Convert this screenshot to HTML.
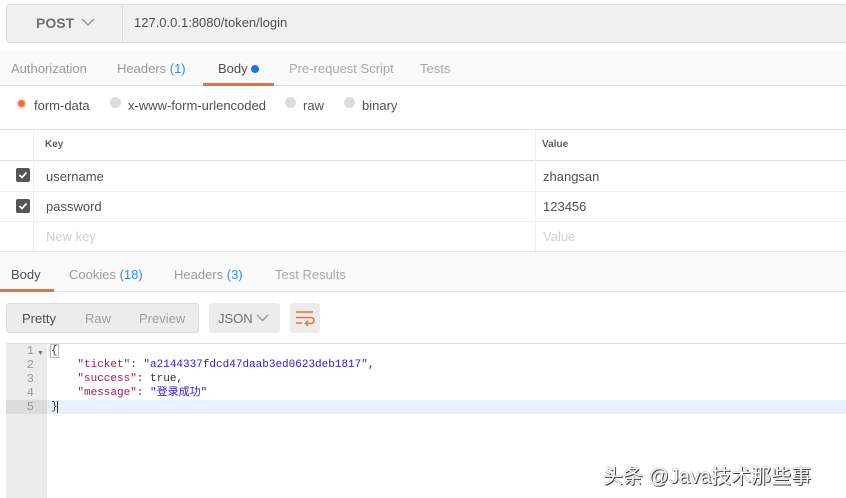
<!DOCTYPE html>
<html><head><meta charset="utf-8"><style>
*{box-sizing:border-box;margin:0;padding:0}
body{width:846px;height:498px;background:#fff;font-family:"Liberation Sans","Noto Sans CJK SC",sans-serif;font-size:13px;color:#505050;position:relative;overflow:hidden}
.a{position:absolute;white-space:nowrap}
.mono{font-family:"Liberation Mono","Noto Sans CJK SC",monospace;font-size:11px}
</style></head><body>
<div class="a" style="left:6px;top:4px;width:842px;height:39px;background:#f0f0f0;border:1px solid #dcdcdc;border-radius:3px"></div>
<div class="a" style="left:122px;top:5px;width:1px;height:37px;background:#dcdcdc"></div>
<div class="a" style="left:36px;top:15px;font-size:14px;font-weight:bold;color:#707070">POST</div>
<svg class="a" style="left:81px;top:18px" width="14" height="9"><path d="M1 1 L7 7 L13 1" stroke="#9a9a9a" stroke-width="1.5" fill="none"/></svg>
<div class="a" style="left:134px;top:15px;color:#505050">127.0.0.1:8080/token/login</div>

<div class="a" style="left:0;top:50px;width:846px;height:36px;background:#fafafa;border-bottom:1px solid #e0e0e0"></div>
<div class="a" style="left:11px;top:61px;color:#999">Authorization</div>
<div class="a" style="left:117px;top:61px;color:#999">Headers <span style="color:#2a8ef0">(1)</span></div>
<div class="a" style="left:218px;top:61px;color:#505050">Body</div>
<div class="a" style="left:251px;top:65px;width:8px;height:8px;border-radius:50%;background:#1a73f0"></div>
<div class="a" style="left:203px;top:83px;width:71px;height:3px;background:#f26b3a"></div>
<div class="a" style="left:289px;top:61px;color:#a8a8a8">Pre-request Script</div>
<div class="a" style="left:420px;top:61px;color:#a8a8a8">Tests</div>

<div class="a" style="left:16px;top:98px;width:11px;height:11px;border-radius:50%;background:#f26b3a;border:2px solid #e8e8e8"></div>
<div class="a" style="left:34px;top:98px">form-data</div>
<div class="a" style="left:110px;top:97px;width:11px;height:11px;border-radius:50%;background:#dcdcdc"></div>
<div class="a" style="left:128px;top:98px">x-www-form-urlencoded</div>
<div class="a" style="left:285px;top:97px;width:11px;height:11px;border-radius:50%;background:#dcdcdc"></div>
<div class="a" style="left:303px;top:98px">raw</div>
<div class="a" style="left:344px;top:97px;width:11px;height:11px;border-radius:50%;background:#dcdcdc"></div>
<div class="a" style="left:362px;top:98px">binary</div>

<div class="a" style="left:0;top:129px;width:846px;height:1px;background:#e0e0e0"></div>
<div class="a" style="left:0;top:160px;width:846px;height:1px;background:#e0e0e0"></div>
<div class="a" style="left:0;top:191px;width:846px;height:1px;background:#f0f0f0"></div>
<div class="a" style="left:0;top:221px;width:846px;height:1px;background:#f0f0f0"></div>
<div class="a" style="left:0;top:251px;width:846px;height:1px;background:#e0e0e0"></div>
<div class="a" style="left:33px;top:130px;width:1px;height:121px;background:#f0f0f0"></div>
<div class="a" style="left:535px;top:130px;width:1px;height:121px;background:#f0f0f0"></div>
<div class="a" style="left:45px;top:139px;font-size:10px;font-weight:bold;color:#606060">Key</div>
<div class="a" style="left:542px;top:139px;font-size:10px;font-weight:bold;color:#606060">Value</div>
<svg class="a" style="left:16px;top:168px" width="14" height="14"><rect width="14" height="14" rx="2" fill="#555"/><path d="M3.5 7 L6 9.5 L10.5 4.5" stroke="#fff" stroke-width="1.8" fill="none"/></svg>
<svg class="a" style="left:16px;top:199px" width="14" height="14"><rect width="14" height="14" rx="2" fill="#555"/><path d="M3.5 7 L6 9.5 L10.5 4.5" stroke="#fff" stroke-width="1.8" fill="none"/></svg>
<div class="a" style="left:46px;top:169px">username</div>
<div class="a" style="left:543px;top:169px">zhangsan</div>
<div class="a" style="left:46px;top:199px">password</div>
<div class="a" style="left:543px;top:199px">123456</div>
<div class="a" style="left:46px;top:229px;color:#d0d0d0">New key</div>
<div class="a" style="left:543px;top:229px;color:#d0d0d0">Value</div>

<div class="a" style="left:0;top:252px;width:846px;height:40px;background:#fafafa;border-bottom:1px solid #e0e0e0"></div>
<div class="a" style="left:11px;top:267px;color:#505050">Body</div>
<div class="a" style="left:0;top:289px;width:54px;height:3px;background:#f26b3a"></div>
<div class="a" style="left:69px;top:267px;color:#999">Cookies <span style="color:#2a8ef0">(18)</span></div>
<div class="a" style="left:174px;top:267px;color:#999">Headers <span style="color:#2a8ef0">(3)</span></div>
<div class="a" style="left:275px;top:267px;color:#a8a8a8">Test Results</div>

<div class="a" style="left:6px;top:303px;width:193px;height:30px;background:#ececec;border:1px solid #dcdcdc;border-radius:3px"></div>
<div class="a" style="left:22px;top:311px;color:#505050">Pretty</div>
<div class="a" style="left:85px;top:311px;color:#a0a0a0">Raw</div>
<div class="a" style="left:139px;top:311px;color:#a0a0a0">Preview</div>
<div class="a" style="left:209px;top:303px;width:71px;height:30px;background:#ececec;border-radius:3px"></div>
<div class="a" style="left:218px;top:311px;color:#707070">JSON</div>
<svg class="a" style="left:256px;top:314px" width="13" height="8"><path d="M1 1 L6.5 6.5 L12 1" stroke="#9a9a9a" stroke-width="1.4" fill="none"/></svg>
<div class="a" style="left:290px;top:303px;width:30px;height:30px;background:#ececec;border-radius:3px"></div>
<svg class="a" style="left:295px;top:309px" width="20" height="18"><path d="M1 3 H18 M1 8.5 H16 a3 3 0 0 1 0 6 H11 M1 14 H7" stroke="#f26b3a" stroke-width="1.6" fill="none"/><path d="M13 11.5 L10.5 14.5 L13 17" stroke="#f26b3a" stroke-width="1.4" fill="none"/></svg>

<div class="a" style="left:6px;top:343px;width:840px;height:1px;background:#dcdcdc"></div>
<div class="a" style="left:6px;top:344px;width:41px;height:154px;background:#ebebeb"></div>
<div class="a" style="left:47px;top:400px;width:799px;height:14px;background:#e8f2fe"></div>
<div class="a" style="left:6px;top:400px;width:41px;height:14px;background:#dcdcdc"></div>
<div class="a mono" style="left:6px;top:344px;width:28px;text-align:right;color:#999;line-height:14px;font-size:12px">1<br>2<br>3<br>4<br>5</div>
<div class="a" style="left:37px;top:350px;font-size:7px;color:#777">▼</div>
<div class="a mono" style="left:51px;top:344px;line-height:14px;color:#333;white-space:pre"><span style="outline:1px solid #bbb">{</span>
    <span style="color:#a31a5a">"ticket"</span>: <span style="color:#2a1ae0">"a2144337fdcd47daab3ed0623deb1817"</span>,
    <span style="color:#a31a5a">"success"</span>: true,
    <span style="color:#a31a5a">"message"</span>: <span style="color:#2a1ae0">"登录成功"</span>
}</div>
<div class="a" style="left:57px;top:401px;width:1px;height:12px;background:#333"></div>

<div class="a" style="left:603px;top:460px;font-size:20px;color:#fff;text-shadow:0 0 1px #333,1px 1px 0 #444">头条 @Java技术那些事</div>
</body></html>
